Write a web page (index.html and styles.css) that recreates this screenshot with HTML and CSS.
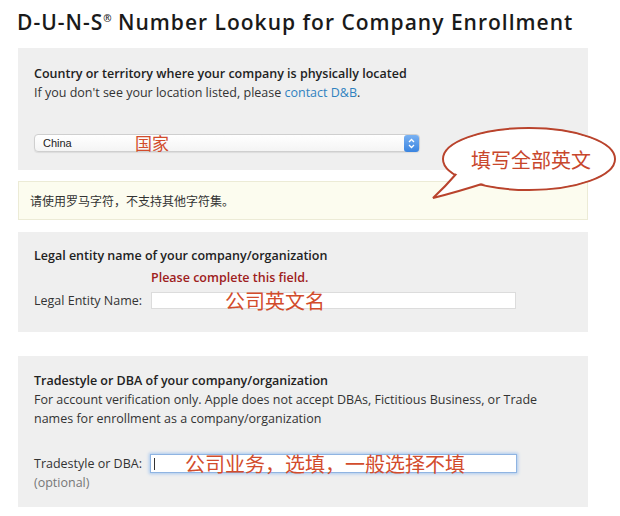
FILE: index.html
```html
<!DOCTYPE html>
<html lang="en">
<head>
    <meta charset="UTF-8">
    <meta name="viewport" content="width=device-width, initial-scale=1.0">
    <title>D-U-N-S Number Lookup</title>
    <link rel="stylesheet" href="styles.css">
</head>
<body>
    <div class="page">
        <h1 class="title">D-U-N-S<sup>®</sup> Number Lookup for Company Enrollment</h1>

        <!-- Country section -->
        <section class="panel panel-country">
            <h2 class="panel-title">Country or territory where your company is physically located</h2>
            <p class="panel-text">If you don't see your location listed, please <a href="#" class="link">contact D&amp;B</a>.</p>
            <div class="select">
                <span class="select-value">China</span>
                <span class="note note-country">国家</span>
                <span class="stepper">
                    <svg width="15" height="17" viewBox="0 0 15 17">
                        <defs>
                            <linearGradient id="stepGrad" x1="0" y1="0" x2="0" y2="1">
                                <stop offset="0" stop-color="#79b1f2"/>
                                <stop offset="1" stop-color="#3a84e0"/>
                            </linearGradient>
                        </defs>
                        <rect x="0" y="0" width="15" height="17" rx="3" fill="url(#stepGrad)"/>
                        <path d="M5 7 L7.5 4.5 L10 7" fill="none" stroke="#fff" stroke-width="1.3"/>
                        <path d="M5 10 L7.5 12.5 L10 10" fill="none" stroke="#fff" stroke-width="1.3"/>
                    </svg>
                </span>
            </div>
        </section>

        <div class="notice">请使用罗马字符，不支持其他字符集。</div>

        <!-- Legal name section -->
        <section class="panel panel-legal">
            <h2 class="panel-title">Legal entity name of your company/organization</h2>
            <p class="error">Please complete this field.</p>
            <div class="field-row">
                <label class="field-label">Legal Entity Name:</label>
                <div class="input input-legal"><span class="note note-legal">公司英文名</span></div>
            </div>
        </section>

        <!-- Tradestyle section -->
        <section class="panel panel-trade">
            <h2 class="panel-title">Tradestyle or DBA of your company/organization</h2>
            <p class="panel-text">For account verification only. Apple does not accept DBAs, Fictitious Business, or Trade names for enrollment as a company/organization</p>
            <div class="field-row field-row-top">
                <div class="label-col">
                    <label class="field-label">Tradestyle or DBA:</label>
                    <span class="optional">(optional)</span>
                </div>
                <div class="input input-trade"><span class="caret"></span><span class="note note-trade">公司业务，选填，一般选择不填</span></div>
            </div>
        </section>

        <!-- Callout bubble -->
        <svg class="callout" width="194" height="84" viewBox="0 0 194 84">
            <ellipse cx="103" cy="37" rx="86" ry="31" fill="#fff" stroke="#b9432c" stroke-width="2"/>
            <path d="M31 51 Q19 65 7 76 Q31 70 59 61" fill="#fff" stroke="#b9432c" stroke-width="2"/>
            <ellipse cx="103" cy="37" rx="84.5" ry="29.5" fill="#fff"/>
            <text x="105" y="46" text-anchor="middle" class="callout-text">填写全部英文</text>
        </svg>
    </div>
</body>
</html>
```

FILE: styles.css
```css
body {
    margin: 0;
    font-family: "Open Sans", "Liberation Sans", "Noto Sans CJK SC", sans-serif;
    color: #333;
    background-color: #fff;
}

.page {
    position: relative;
    padding: 9px 32px 0 18px;
}

.title {
    margin: 0 0 0 -1px;
    font-family: "Open Sans", "Liberation Sans", sans-serif;
    font-weight: 600;
    font-size: 21px;
    line-height: 26px;
    letter-spacing: 1px;
    color: #1a1a1a;
}

.title sup {
    font-size: 10px;
    vertical-align: 8px;
    line-height: 0;
    letter-spacing: 0;
}

.panel {
    background-color: #efefef;
    padding: 0 16px;
}

.panel-title {
    margin: 0;
    font-size: 12.5px;
    font-weight: 600;
    line-height: 19px;
    color: #222;
}

.panel-text {
    margin: 0;
    font-size: 12.5px;
    line-height: 19px;
    color: #333;
}

.link {
    color: #2f82c0;
    text-decoration: none;
}

/* Country */
.panel-country {
    margin-top: 13px;
    padding-top: 16px;
    padding-bottom: 18px;
}

.select {
    display: flex;
    align-items: center;
    width: 386px;
    height: 18px;
    margin-top: 32px;
    box-sizing: border-box;
    border: 1px solid #cfcfcf;
    border-radius: 4px;
    background: linear-gradient(#ffffff, #f4f4f4);
    box-shadow: 0 1px 1px rgba(0, 0, 0, 0.08);
}

.select-value {
    width: 100px;
    padding-left: 8px;
    box-sizing: border-box;
    font-family: "Liberation Sans", Arial, sans-serif;
    font-size: 11px;
    color: #222;
}

.stepper {
    display: flex;
    margin-left: auto;
}

.note {
    font-family: "Noto Sans CJK SC", sans-serif;
    color: #d24c2c;
    white-space: nowrap;
}

.note-country {
    font-size: 17px;
    line-height: 18px;
}

/* Notice */
.notice {
    margin-top: 11px;
    height: 39px;
    box-sizing: border-box;
    padding-left: 11px;
    border: 1px solid #ecebd6;
    background-color: #fcfcef;
    font-family: "Noto Sans CJK SC", sans-serif;
    font-size: 12px;
    line-height: 37px;
    color: #333;
}

/* Legal */
.panel-legal {
    margin-top: 12px;
    padding-top: 14px;
    padding-bottom: 22px;
}

.error {
    margin: 3px 0 0 117px;
    font-size: 12.5px;
    font-weight: 600;
    line-height: 19px;
    color: #9e2020;
}

.field-row {
    display: flex;
    align-items: center;
    margin-top: 4px;
}

.field-row-top {
    align-items: flex-start;
    margin-top: 26px;
}

.field-label {
    width: 117px;
    font-size: 12.5px;
    line-height: 19px;
    color: #333;
}

.label-col {
    display: flex;
    flex-direction: column;
    width: 116px;
}

.optional {
    font-size: 12.5px;
    line-height: 19px;
    color: #777;
}

.input {
    display: flex;
    align-items: center;
    box-sizing: border-box;
    background-color: #fff;
}

.input-legal {
    width: 365px;
    height: 17px;
    border: 1px solid #dcdcdc;
}

.note-legal {
    margin-left: 73px;
    font-size: 20px;
    line-height: 17px;
}

/* Tradestyle */
.panel-trade {
    margin-top: 24px;
    padding-top: 15px;
    padding-bottom: 15px;
}

.input-trade {
    width: 367px;
    height: 19px;
    border: 1px solid #8fb4e2;
    box-shadow: 0 0 3px 1px #a9c9ef;
}

.caret {
    width: 1px;
    height: 12px;
    margin-left: 3px;
    background-color: #333;
}

.note-trade {
    margin-left: 30px;
    font-size: 20px;
    line-height: 19px;
}

/* Callout */
.callout {
    position: absolute;
    left: 426px;
    top: 122px;
}

.callout-text {
    font-family: "Noto Sans CJK SC", sans-serif;
    font-size: 20px;
    fill: #c8472c;
}
```
